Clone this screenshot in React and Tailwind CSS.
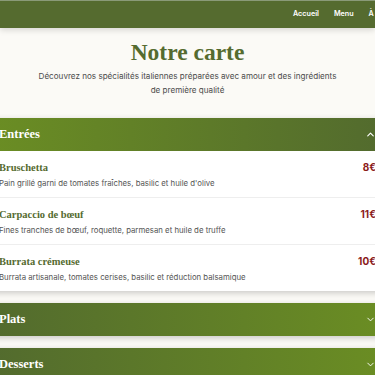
import { ChevronUp, ChevronDown } from 'lucide-react';

const entrees = [
  { name: 'Bruschetta', desc: "Pain grillé garni de tomates fraîches, basilic et huile d'olive", price: '8€' },
  { name: 'Carpaccio de bœuf', desc: 'Fines tranches de bœuf, roquette, parmesan et huile de truffe', price: '11€' },
  { name: 'Burrata crémeuse', desc: 'Burrata artisanale, tomates cerises, basilic et réduction balsamique', price: '10€' },
];

const serif = "font-['Liberation_Serif','DejaVu_Serif',serif]";
const sans = "font-['Inter','Liberation_Sans',sans-serif]";

function SectionHeader({ title, open, reverse }) {
  return (
    <div
      className={
        'flex h-[33px] items-center justify-between px-4 text-white ' +
        (reverse
          ? 'bg-[linear-gradient(to_right,#526a2e,#6b8e23)]'
          : 'bg-[linear-gradient(to_right,#6b8e23,#526a2e)]')
      }
    >
      <h2 className={serif + ' text-[12.5px] font-bold'}>{title}</h2>
      {open ? <ChevronUp size={11} strokeWidth={2.5} /> : <ChevronDown size={11} strokeWidth={2} />}
    </div>
  );
}

export default function App() {
  return (
    <div className={sans + ' h-[375px] w-full overflow-hidden bg-[#fbfaf6]'}>
      {/* Top bar */}
      <header className="flex h-[28px] items-center overflow-hidden border-t border-[#8a9a78] bg-[#556b2f] shadow-[0_2px_6px_rgba(0,0,0,0.15)]">
        <nav className="ml-[293px] flex shrink-0 gap-[15px] whitespace-nowrap text-[7.2px] font-semibold text-white">
          <a>Accueil</a>
          <a>Menu</a>
          <a>À propos</a>
          <a>Contact</a>
        </nav>
      </header>

      <section className="pt-[8px] text-center">
        <h1 className={serif + ' text-[23.5px] font-bold leading-[32px] text-[#556b2f]'}>Notre carte</h1>
        <p className="mx-auto mt-[2px] w-[302px] text-[8.1px] leading-[13.5px] text-[#4b4b4b]">
          Découvrez nos spécialités italiennes préparées avec amour et des ingrédients de première qualité
        </p>
      </section>

      <div className="-mx-[17px] mt-[21px] flex flex-col gap-[12px]">
        <div className="overflow-hidden rounded-md bg-white shadow-[0_2px_6px_rgba(0,0,0,0.2)]">
          <SectionHeader title="Entrées" open />
          <ul>
            {entrees.map((item, i) => (
              <li
                key={item.name}
                className={'px-4 pt-[9px] pb-[8px] ' + (i < entrees.length - 1 ? 'border-b border-[#eeeeee]' : '')}
              >
                <div className="flex items-center justify-between">
                  <h3 className={serif + ' text-[10.5px] font-bold leading-[14px] text-[#556b2f]'}>{item.name}</h3>
                  <span className="text-[10px] font-bold text-[#8b1a1a]">{item.price}</span>
                </div>
                <p className="mt-[2px] text-[7.8px] leading-[12px] text-[#555]">{item.desc}</p>
              </li>
            ))}
          </ul>
        </div>

        <div className="overflow-hidden rounded-md bg-white shadow-[0_2px_6px_rgba(0,0,0,0.2)]">
          <SectionHeader title="Plats" reverse />
        </div>

        <div className="overflow-hidden rounded-md bg-white shadow-[0_2px_6px_rgba(0,0,0,0.2)]">
          <SectionHeader title="Desserts" reverse />
        </div>
      </div>
    </div>
  );
}
